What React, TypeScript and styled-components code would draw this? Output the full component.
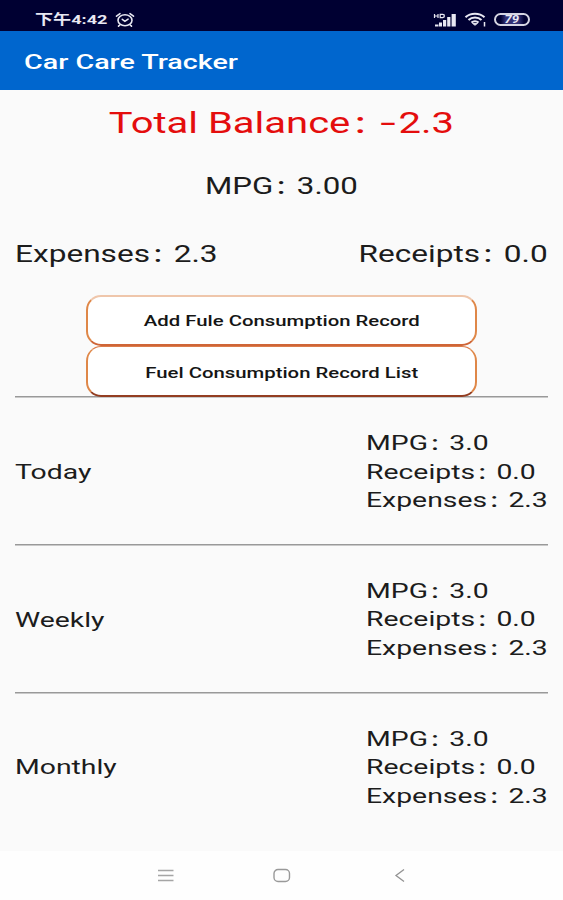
import React from "react";
import styled, { createGlobalStyle } from "styled-components";

const GlobalStyle = createGlobalStyle`
  html, body { margin: 0; padding: 0; }
  body { background: #fafafa; overflow: hidden; }
  * { box-sizing: border-box; }
`;

const Screen = styled.div`
  width: 563px;
  height: 900px;
  display: flex;
  flex-direction: column;
  background: #fafafa;
  color: #1c1c1c;
  font-family: Roboto, "Noto Sans CJK SC", sans-serif;
`;

const StatusBar = styled.div`
  height: 31px;
  flex: none;
  padding: 8px 33px 0 34.5px;
  display: flex;
  justify-content: space-between;
  background: #000032;
  color: #e8e8f2;
`;

const StatusGroup = styled.div<{ $gap: number }>`
  display: flex;
  align-items: center;
  height: 23px;
  gap: ${(p) => p.$gap}px;
`;

const Clock = styled.div`
  width: 73px;
  height: 23px;
`;

const AppBar = styled.header`
  height: 59px;
  flex: none;
  padding: 3px 24px 0 23.5px;
  display: flex;
  align-items: center;
  background: #0066ce;
  color: #fff;
`;

type StretchProps = {
  $size: number;
  $scale: number;
  $origin?: "left" | "center" | "right";
  $weight?: number;
  $line?: number;
};

const Stretch = styled.span<StretchProps>`
  display: block;
  width: max-content;
  white-space: nowrap;
  font-size: ${(p) => p.$size}px;
  font-weight: ${(p) => p.$weight ?? 400};
  line-height: ${(p) => p.$line ?? 30}px;
  transform: scaleX(${(p) => p.$scale});
  transform-origin: ${(p) => p.$origin ?? "left"} center;
`;

const Colon = styled.span`
  margin: 0 0.12em 0 0.12em;
  font-weight: 500;
`;

const Minus = styled.span`
  display: inline-block;
  margin: 0 0.12em 0 0.06em;
  transform: scaleX(1.4);
`;

const Content = styled.main`
  height: 761px;
  flex: none;
  padding: 0 15px;
  display: flex;
  flex-direction: column;
`;

const CenterRow = styled.div<{ $height: number; $color?: string }>`
  height: ${(p) => p.$height}px;
  flex: none;
  display: flex;
  align-items: center;
  justify-content: center;
  color: ${(p) => p.$color ?? "inherit"};
`;

const TotalsRow = styled.div`
  height: 74px;
  flex: none;
  display: flex;
  align-items: center;
  justify-content: space-between;
`;

const Actions = styled.div`
  position: relative;
  z-index: 1;
  margin-top: 4px;
  height: 102px;
  flex: none;
  display: flex;
  flex-direction: column;
  align-items: center;
`;

const ActionButton = styled.button<{ $top: string; $bottom: string; $topWidth: number }>`
  width: 391px;
  height: 51px;
  padding: ${(p) => (p.$topWidth === 1 ? 3 : 1)}px 0 0;
  display: flex;
  align-items: center;
  justify-content: center;
  border: 2px solid #df8748;
  border-top: ${(p) => p.$topWidth}px solid ${(p) => p.$top};
  border-bottom-color: ${(p) => p.$bottom};
  border-radius: 15px;
  background: #fff;
  color: #151515;
  font-family: inherit;
`;

const Periods = styled.div`
  margin-top: -1px;
  display: flex;
  flex-direction: column;
`;

const Period = styled.section`
  height: 147.8px;
  flex: none;
  padding: 4px 0 0;
  display: flex;
  align-items: center;
  justify-content: space-between;
  background: linear-gradient(#999, #999) top / 100% 1.5px no-repeat;
`;

const Figures = styled.div`
  width: 182.5px;
`;

const NavBar = styled.nav`
  height: 49px;
  flex: none;
  padding: 0 156px;
  display: flex;
  align-items: center;
  justify-content: space-between;
  background: #fefefe;
`;

const Battery = styled.div`
  width: 36px;
  height: 13px;
  display: flex;
  align-items: center;
  justify-content: center;
  border: 2px solid #d4d4e2;
  border-radius: 8px;
  background: linear-gradient(90deg, #000032 15%, #303075 30%, #303075 70%, #000032 88%);
  font-style: italic;
`;

function AlarmIcon() {
  return (
    <svg width="20" height="16" viewBox="0 0 20 16" fill="none" stroke="currentColor" strokeWidth="1.6" strokeLinecap="round">
      <ellipse cx="10" cy="8.3" rx="7" ry="5.5" />
      <path d="M1.5 4.2 5 1.7M18.5 4.2 15 1.7M4.8 13l-1.3 1.2M15.2 13l1.3 1.2M7.3 7.3l2.6 2 3.2-2.2" />
    </svg>
  );
}

function SignalIcon() {
  return (
    <svg width="24" height="14" viewBox="0 0 24 14" fill="currentColor">
      <path d="M1.5 1v4M5 1v4M1.5 3H5M7.2 1.400v3.200h2.500l1.500-.7V2l-1.500-.6z" fill="none" stroke="currentColor" strokeWidth="1.2" />
      <path d="M2 11.500h3.500v2H2zM6 9.500h3v4H6zM10 7h3.200v6.500H10zM14.200 4h3.200v9.500h-3.200zM18.600 1h4.200v12.500h-4.200z" />
    </svg>
  );
}

function WifiIcon() {
  return (
    <svg width="23" height="15" viewBox="0 0 23 15" fill="none" stroke="currentColor" strokeWidth="2.1">
      <path d="M1.500 5.200C6.500.5 15.500.5 20.500 5.200M4.500 8c3.500-3.300 9.500-3.300 13 0M7.500 10.600c2-1.800 5-1.800 7 0" />
      <path d="m8.500 11.300 2.500 2 2.500-2z" fill="currentColor" strokeWidth="1" />
      <path d="M20.500 10v4.500" strokeWidth="1.500" />
    </svg>
  );
}

function Amount({ label, value }: { label: string; value: string }) {
  const negative = value.startsWith("-");
  return (
    <>
      {label}
      <Colon>:</Colon>{" "}
      {negative && <Minus>-</Minus>}
      {negative ? value.slice(1) : value}
    </>
  );
}

const periods = ["Today", "Weekly", "Monthly"];

const figures = [
  { label: "MPG", value: "3.0" },
  { label: "Receipts", value: "0.0" },
  { label: "Expenses", value: "2.3" },
];

function App() {
  return (
    <>
      <GlobalStyle />
      <Screen>
        <StatusBar>
          <StatusGroup $gap={7}>
            <Clock>
              <Stretch $size={13.5} $scale={1.34} $weight={700} $line={23}>下午4:42</Stretch>
            </Clock>
            <AlarmIcon />
          </StatusGroup>
          <StatusGroup $gap={7}>
            <SignalIcon />
            <WifiIcon />
            <Battery>
              <Stretch $size={10.5} $scale={1.25} $weight={700} $line={10} $origin="center">79</Stretch>
            </Battery>
          </StatusGroup>
        </StatusBar>
        <AppBar>
          <Stretch $size={21} $scale={1.365} $weight={500}>Car Care Tracker</Stretch>
        </AppBar>
        <Content>
          <CenterRow $height={65} $color="#e40d0d">
            <Stretch $size={29.5} $scale={1.355} $origin="center">
              <Amount label="Total Balance" value="-2.3" />
            </Stretch>
          </CenterRow>
          <CenterRow $height={62}>
            <Stretch $size={23.5} $scale={1.33} $origin="center">
              <Amount label="MPG" value="3.00" />
            </Stretch>
          </CenterRow>
          <TotalsRow>
            <Stretch $size={23.5} $scale={1.345}>
              <Amount label="Expenses" value="2.3" />
            </Stretch>
            <Stretch $size={23.5} $scale={1.345} $origin="right">
              <Amount label="Receipts" value="0.0" />
            </Stretch>
          </TotalsRow>
          <Actions>
            <ActionButton $top="#efc6ab" $bottom="#cf6537" $topWidth={2}>
              <Stretch $size={15} $scale={1.355} $weight={500} $origin="center">Add Fule Consumption Record</Stretch>
            </ActionButton>
            <ActionButton $top="#dc7d4c" $bottom="#933d21" $topWidth={1}>
              <Stretch $size={15} $scale={1.355} $weight={500} $origin="center">Fuel Consumption Record List</Stretch>
            </ActionButton>
          </Actions>
          <Periods>
            {periods.map((name) => (
              <Period key={name}>
                <Stretch $size={21} $scale={1.35}>{name}</Stretch>
                <Figures>
                  {figures.map((f) => (
                    <Stretch key={f.label} $size={21} $scale={1.35} $line={28.5}>
                      <Amount label={f.label} value={f.value} />
                    </Stretch>
                  ))}
                </Figures>
              </Period>
            ))}
          </Periods>
        </Content>
        <NavBar>
          <svg width="20" height="16" viewBox="0 0 20 16" stroke="#a5a5a5" strokeWidth="1.3">
            <path d="M2 2.500h15.500M2 7.500h15.500M2 12.500h15.500" />
          </svg>
          <svg width="22" height="16" viewBox="0 0 22 16" fill="none" stroke="#999" strokeWidth="1.4">
            <rect x="1" y="1.500" width="15.500" height="12" rx="4" />
          </svg>
          <svg width="16" height="16" viewBox="0 0 16 16" fill="none" stroke="#929292" strokeWidth="1.3">
            <path d="M13 1.500 5 7.500l8 6" />
          </svg>
        </NavBar>
      </Screen>
    </>
  );
}

export default App;
